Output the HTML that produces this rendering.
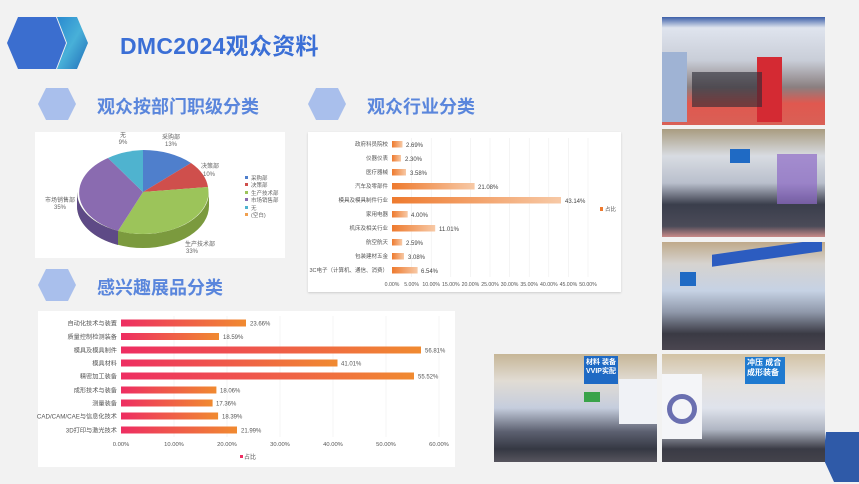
<!DOCTYPE html>
<html><head><meta charset="utf-8"><style>
*{margin:0;padding:0;box-sizing:border-box}
body{width:859px;height:484px;background:#f2f2f2;position:relative;overflow:hidden;font-family:"Liberation Sans","Noto Sans CJK SC",sans-serif}
.abs{position:absolute}
.h1{left:120px;top:27px;font-size:23px;font-weight:bold;color:#3b6fd6;letter-spacing:0.3px}
.h2{font-size:18px;font-weight:bold;color:#5a86dc}
.box{background:#fff;position:absolute}
.photo{position:absolute;overflow:hidden}
</style></head><body>
<svg class="abs" style="left:0;top:0" width="859" height="484">
<polygon points="7,43 18,17 56,17 66,43 56,69 18,69" fill="#3b6ecf"/>
<defs><linearGradient id="tg" x1="0" y1="0" x2="1" y2="1"><stop offset="0" stop-color="#2a8ad0"/><stop offset=".5" stop-color="#48b0d8"/><stop offset="1" stop-color="#1f6cb8"/></linearGradient></defs>
<polygon points="57,17 77,17 88,43 77,69 57,69 67,43" fill="url(#tg)"/>
<polygon points="38,104 46,88 68,88 76,104 68,120 46,120" fill="#a9bfec"/>
<polygon points="308,104 316,88 338,88 346,104 338,120 316,120" fill="#a9bfec"/>
<polygon points="38,285 46,269 68,269 76,285 68,301 46,301" fill="#a9bfec"/>
<polygon points="826,432 859,432 859,482 834,482 823,458" fill="#2f5aa8"/>
</svg>
<div class="abs h1">DMC2024观众资料</div>
<div class="abs h2" style="left:97px;top:93px">观众按部门职级分类</div>
<div class="abs h2" style="left:367px;top:93px">观众行业分类</div>
<div class="abs h2" style="left:97px;top:274px">感兴趣展品分类</div>

<!-- pie box -->
<div class="box" style="left:35px;top:132px;width:250px;height:126px"></div>
<svg class="abs" style="left:0;top:0" width="859" height="484" font-family="Liberation Sans,Noto Sans CJK SC,sans-serif">
<path d="M77,192 L77,206 A66,42 0 0 0 209,206 L209,192 A66,42 0 0 1 77,192 Z" fill="#7b9a3e"/>
<path d="M77,192 L77,206 A66,42 0 0 0 118,245 L118,231 A66,42 0 0 1 77,192 Z" fill="#5e4a86"/>
<path d="M143,192 L143,150 A66,42 0 0 1 191,163 Z" fill="#4f7fcc"/>
<path d="M143,192 L191,163 A66,42 0 0 1 208,187 Z" fill="#cf4f4c"/>
<path d="M143,192 L208,187 A66,42 0 0 1 118,231 Z" fill="#9cc45a"/>
<path d="M143,192 L118,231 A66,42 0 0 1 108,158 Z" fill="#8a6bb0"/>
<path d="M143,192 L108,158 A66,42 0 0 1 143,150 Z" fill="#4fb3cf"/>
<g font-size="6" fill="#666" text-anchor="middle">
<text x="171" y="139">采购部</text><text x="171" y="146">13%</text>
<text x="210" y="168">决策部</text><text x="209" y="176">10%</text>
<text x="123" y="137">无</text><text x="123" y="144">9%</text>
<text x="60" y="202">市场销售部</text><text x="60" y="209">35%</text>
<text x="200" y="246">生产技术部</text><text x="192" y="253">33%</text>
</g>
<g font-size="5.5" fill="#666">
<rect x="245" y="176" width="3" height="3" fill="#4f7fcc"/><text x="251" y="180">采购部</text>
<rect x="245" y="183" width="3" height="3" fill="#cf4f4c"/><text x="251" y="187">决策部</text>
<rect x="245" y="191" width="3" height="3" fill="#9cc45a"/><text x="251" y="195">生产技术部</text>
<rect x="245" y="198" width="3" height="3" fill="#8a6bb0"/><text x="251" y="202">市场销售部</text>
<rect x="245" y="206" width="3" height="3" fill="#4fb3cf"/><text x="251" y="210">无</text>
<rect x="245" y="213" width="3" height="3" fill="#f0a050"/><text x="251" y="217">(空白)</text>
</g>
</svg>

<!-- industry box -->
<div class="box" style="left:308px;top:132px;width:313px;height:160px;box-shadow:0 1px 2px #ccc"></div>
<svg class="abs" style="left:0;top:0" width="859" height="484" font-family="Liberation Sans,Noto Sans CJK SC,sans-serif">
<defs><linearGradient id="og" x1="0" x2="1"><stop offset="0" stop-color="#ee7a2e"/><stop offset="1" stop-color="#f7c9a6"/></linearGradient>
<linearGradient id="rg" x1="0" x2="1"><stop offset="0" stop-color="#ee2d62"/><stop offset="1" stop-color="#f08a30"/></linearGradient></defs>
<g stroke="#eee" stroke-width="0.6">
<line x1="411.6" y1="138" x2="411.6" y2="277"/><line x1="431.2" y1="138" x2="431.2" y2="277"/><line x1="450.8" y1="138" x2="450.8" y2="277"/><line x1="470.4" y1="138" x2="470.4" y2="277"/><line x1="490" y1="138" x2="490" y2="277"/><line x1="509.6" y1="138" x2="509.6" y2="277"/><line x1="529.2" y1="138" x2="529.2" y2="277"/><line x1="548.8" y1="138" x2="548.8" y2="277"/><line x1="568.4" y1="138" x2="568.4" y2="277"/><line x1="588" y1="138" x2="588" y2="277"/>
</g>
<g font-size="5.5" fill="#555" text-anchor="end">
<text x="388" y="146">政府科员院校</text><text x="388" y="160">仪器仪表</text><text x="388" y="174">医疗器械</text><text x="388" y="188">汽车及零部件</text><text x="388" y="202">模具及模具制件行业</text><text x="388" y="216">家用电器</text><text x="388" y="230">机床及相关行业</text><text x="388" y="244">航空航天</text><text x="388" y="258">包装建材五金</text><text x="388" y="272">3C电子（计算机、通信、消费）</text>
</g>
<g fill="url(#og)">
<rect x="392" y="141" width="10.5" height="6.5"/><rect x="392" y="155" width="9" height="6.5"/><rect x="392" y="169" width="14" height="6.5"/><rect x="392" y="183" width="82.6" height="6.5"/><rect x="392" y="197" width="169" height="6.5"/><rect x="392" y="211" width="15.7" height="6.5"/><rect x="392" y="225" width="43.2" height="6.5"/><rect x="392" y="239" width="10.2" height="6.5"/><rect x="392" y="253" width="12" height="6.5"/><rect x="392" y="267" width="25.6" height="6.5"/>
</g>
<g font-size="6" fill="#444">
<text x="406" y="147">2.69%</text><text x="405" y="161">2.30%</text><text x="410" y="175">3.58%</text><text x="478" y="189">21.08%</text><text x="565" y="203">43.14%</text><text x="411" y="217">4.00%</text><text x="439" y="231">11.01%</text><text x="406" y="245">2.59%</text><text x="408" y="259">3.08%</text><text x="421" y="273">6.54%</text>
</g>
<rect x="600" y="207" width="3" height="4" fill="#ee7a2e"/><text x="605" y="211" font-size="5.5" fill="#555">占比</text>
<g font-size="5.2" fill="#555" text-anchor="middle">
<text x="392" y="286">0.00%</text><text x="411.6" y="286">5.00%</text><text x="431.2" y="286">10.00%</text><text x="450.8" y="286">15.00%</text><text x="470.4" y="286">20.00%</text><text x="490" y="286">25.00%</text><text x="509.6" y="286">30.00%</text><text x="529.2" y="286">35.00%</text><text x="548.8" y="286">40.00%</text><text x="568.4" y="286">45.00%</text><text x="588" y="286">50.00%</text>
</g>
</svg>

<!-- exhibits box -->
<div class="box" style="left:38px;top:311px;width:417px;height:156px"></div>
<svg class="abs" style="left:0;top:0" width="859" height="484" font-family="Liberation Sans,Noto Sans CJK SC,sans-serif">
<g stroke="#eee" stroke-width="0.6">
<line x1="174" y1="316" x2="174" y2="437"/><line x1="227" y1="316" x2="227" y2="437"/><line x1="280" y1="316" x2="280" y2="437"/><line x1="333" y1="316" x2="333" y2="437"/><line x1="386" y1="316" x2="386" y2="437"/><line x1="439" y1="316" x2="439" y2="437"/>
</g>
<g font-size="6.2" fill="#555" text-anchor="end">
<text x="117" y="325.5">自动化技术与装置</text><text x="117" y="339">质量控制检测装备</text><text x="117" y="352.5">模具及模具制件</text><text x="117" y="365.5">模具材料</text><text x="117" y="378.5">精密加工装备</text><text x="117" y="392.5">成形技术与装备</text><text x="117" y="405.5">测量装备</text><text x="117" y="418.5">CAD/CAM/CAE与信息化技术</text><text x="117" y="432.5">3D打印与激光技术</text>
</g>
<g fill="url(#rg)">
<rect x="121" y="319.5" width="125" height="7"/><rect x="121" y="333" width="98" height="7"/><rect x="121" y="346.5" width="300" height="7"/><rect x="121" y="359.5" width="216.5" height="7"/><rect x="121" y="372.5" width="293" height="7"/><rect x="121" y="386.5" width="95.4" height="7"/><rect x="121" y="399.5" width="91.6" height="7"/><rect x="121" y="412.5" width="97.1" height="7"/><rect x="121" y="426.5" width="116" height="7"/>
</g>
<g font-size="6" fill="#555">
<text x="250" y="325.5">23.66%</text><text x="223" y="339">18.59%</text><text x="425" y="352.5">56.81%</text><text x="341" y="365.5">41.01%</text><text x="418" y="378.5">55.52%</text><text x="220" y="392.5">18.06%</text><text x="216" y="405.5">17.36%</text><text x="222" y="418.5">18.39%</text><text x="241" y="432.5">21.99%</text>
</g>
<g font-size="5.8" fill="#555" text-anchor="middle">
<text x="121" y="446">0.00%</text><text x="174" y="446">10.00%</text><text x="227" y="446">20.00%</text><text x="280" y="446">30.00%</text><text x="333" y="446">40.00%</text><text x="386" y="446">50.00%</text><text x="439" y="446">60.00%</text>
</g>
<rect x="240" y="455" width="3" height="3" fill="#ee2d62"/><text x="244" y="459" font-size="6" fill="#555">占比</text>
</svg>

<!-- photos -->
<div class="photo" style="left:662px;top:17px;width:163px;height:108px;background:linear-gradient(180deg,#3d5fa8 0%,#dfe4ee 10%,#c9ced8 40%,#8a7f80 65%,#e0584f 80%,#d96056 100%)">
<div class="abs" style="left:95px;top:40px;width:25px;height:65px;background:#d42a33"></div>
<div class="abs" style="left:0;top:35px;width:25px;height:70px;background:#9fb3d4"></div>
<div class="abs" style="left:30px;top:55px;width:70px;height:35px;background:#2a2a33;opacity:.6"></div>
</div>
<div class="photo" style="left:662px;top:129px;width:163px;height:108px;background:linear-gradient(180deg,#a99c80 0%,#d8dce2 25%,#b9bfcc 50%,#3a3e4c 70%,#4b4b58 90%,#c98a88 100%)">
<div class="abs" style="left:68px;top:20px;width:20px;height:14px;background:#1f6ac4"></div>
<div class="abs" style="left:115px;top:25px;width:40px;height:50px;background:#8d6ac6;opacity:.7"></div>
</div>
<div class="photo" style="left:662px;top:242px;width:163px;height:108px;background:linear-gradient(180deg,#bfa98a 0%,#d6d3cf 20%,#c6d2e4 45%,#8f98aa 65%,#3a3a44 85%,#4a4650 100%)">
<div class="abs" style="left:50px;top:5px;width:110px;height:12px;background:#2c5cc0;transform:skewY(-8deg)"></div>
<div class="abs" style="left:18px;top:30px;width:16px;height:14px;background:#1f6ac4"></div>
</div>
<div class="photo" style="left:494px;top:354px;width:163px;height:108px;background:linear-gradient(180deg,#c6b697 0%,#e1dcd4 25%,#c5cddd 50%,#5c6070 72%,#353843 88%,#57555e 100%)">
<div class="abs" style="left:90px;top:2px;width:34px;height:28px;background:#1f6ac4"></div>
<div class="abs" style="left:90px;top:38px;width:16px;height:10px;background:#3aa34a"></div>
<div class="abs" style="left:125px;top:25px;width:38px;height:45px;background:#f0f2f6"></div>
</div>
<div class="photo" style="left:662px;top:354px;width:163px;height:108px;background:linear-gradient(180deg,#d2c2a4 0%,#e5e1dc 25%,#dfe3ec 50%,#b0b6c3 70%,#3a3b45 88%,#44434b 100%)">
<div class="abs" style="left:83px;top:3px;width:40px;height:27px;background:#1f7ad0"></div>
<div class="abs" style="left:0;top:20px;width:40px;height:65px;background:#f4f5f8"></div>
<div class="abs" style="left:5px;top:40px;width:30px;height:30px;border:5px solid #6a6fb0;border-radius:50%"></div>
</div>
<svg class="abs" style="left:0;top:0" width="859" height="484" font-family="Liberation Sans,Noto Sans CJK SC,sans-serif" font-weight="bold">
<text x="747" y="365" font-size="8" fill="#fff">冲压 成合</text><text x="747" y="375" font-size="8" fill="#fff">成形装备</text>
<text x="586" y="364" font-size="7" fill="#fff">材料 装备</text><text x="586" y="373" font-size="7" fill="#fff">VVIP实配</text>
</svg>
</body></html>
